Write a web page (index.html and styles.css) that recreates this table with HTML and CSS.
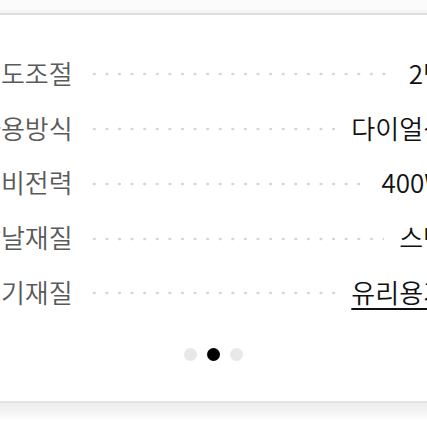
FILE: index.html
```html
<!DOCTYPE html>
<html lang="ko">
<head>
  <meta charset="UTF-8" />
  <meta name="viewport" content="width=device-width, initial-scale=1" />
  <title>제품 사양</title>
  <link rel="stylesheet" href="styles.css">
</head>
<body>

  <!-- 상단 구분선 -->
  <div class="top-bar"></div>

  <!-- 사양 목록 -->
  <section class="spec">
    <div class="spec-row">
      <span class="spec-label">온도조절</span>
      <span class="spec-dots"></span>
      <span class="spec-value">2단</span>
    </div>
    <div class="spec-row">
      <span class="spec-label">사용방식</span>
      <span class="spec-dots"></span>
      <span class="spec-value">다이얼식</span>
    </div>
    <div class="spec-row">
      <span class="spec-label">소비전력</span>
      <span class="spec-dots"></span>
      <span class="spec-value">400W</span>
    </div>
    <div class="spec-row">
      <span class="spec-label">칼날재질</span>
      <span class="spec-dots"></span>
      <span class="spec-value">스텐</span>
    </div>
    <div class="spec-row">
      <span class="spec-label">용기재질</span>
      <span class="spec-dots"></span>
      <span class="spec-value link">유리용기</span>
    </div>
  </section>

  <!-- 페이지 표시 -->
  <div class="pager">
    <span class="dot"></span>
    <span class="dot active"></span>
    <span class="dot"></span>
  </div>

  <div class="bottom-bar"></div>

</body>
</html>
```

FILE: styles.css
```css
* {
  margin: 0;
  padding: 0;
  box-sizing: border-box;
}

html, body {
  width: 427px;
  height: 427px;
  overflow: hidden;
}

body {
  font-family: "Noto Sans CJK KR", "Noto Sans", sans-serif;
  background: #fff;
  color: #111;
}

.top-bar {
  height: 15px;
  background: linear-gradient(#fbfbfb 0, #fbfbfb 8px, #f4f4f4 12px);
  border-bottom: 2px solid #dedede;
}

.spec {
  margin: 30px -20px 0 -23px;
}

.spec-row {
  display: flex;
  align-items: center;
  height: 54.75px;
  font-size: 26px;
  font-weight: 350;
}

.spec-label {
  color: #5a5a5a;
  white-space: nowrap;
}

.spec-dots {
  flex: 1;
  height: 4px;
  margin: 4px 15px 0;
  background-image: radial-gradient(circle, #d6d6d6 1.3px, transparent 1.6px);
  background-size: 12.6px 4px;
  background-repeat: repeat-x;
}

.spec-value {
  color: #111;
  white-space: nowrap;
}

.spec-value.link {
  text-decoration: underline;
  text-decoration-thickness: 2px;
  text-underline-offset: 5px;
}

.pager {
  display: flex;
  justify-content: center;
  gap: 10px;
  margin-top: 29px;
}

.dot {
  width: 13px;
  height: 13px;
  border-radius: 50%;
  background: #e8e8e8;
}

.dot.active {
  background: #000;
}

.bottom-bar {
  margin-top: 40px;
  height: 20px;
  border-top: 2px solid #e3e3e3;
  background: linear-gradient(#ededed, #f3f3f3 8px, #fff 18px);
}
```
